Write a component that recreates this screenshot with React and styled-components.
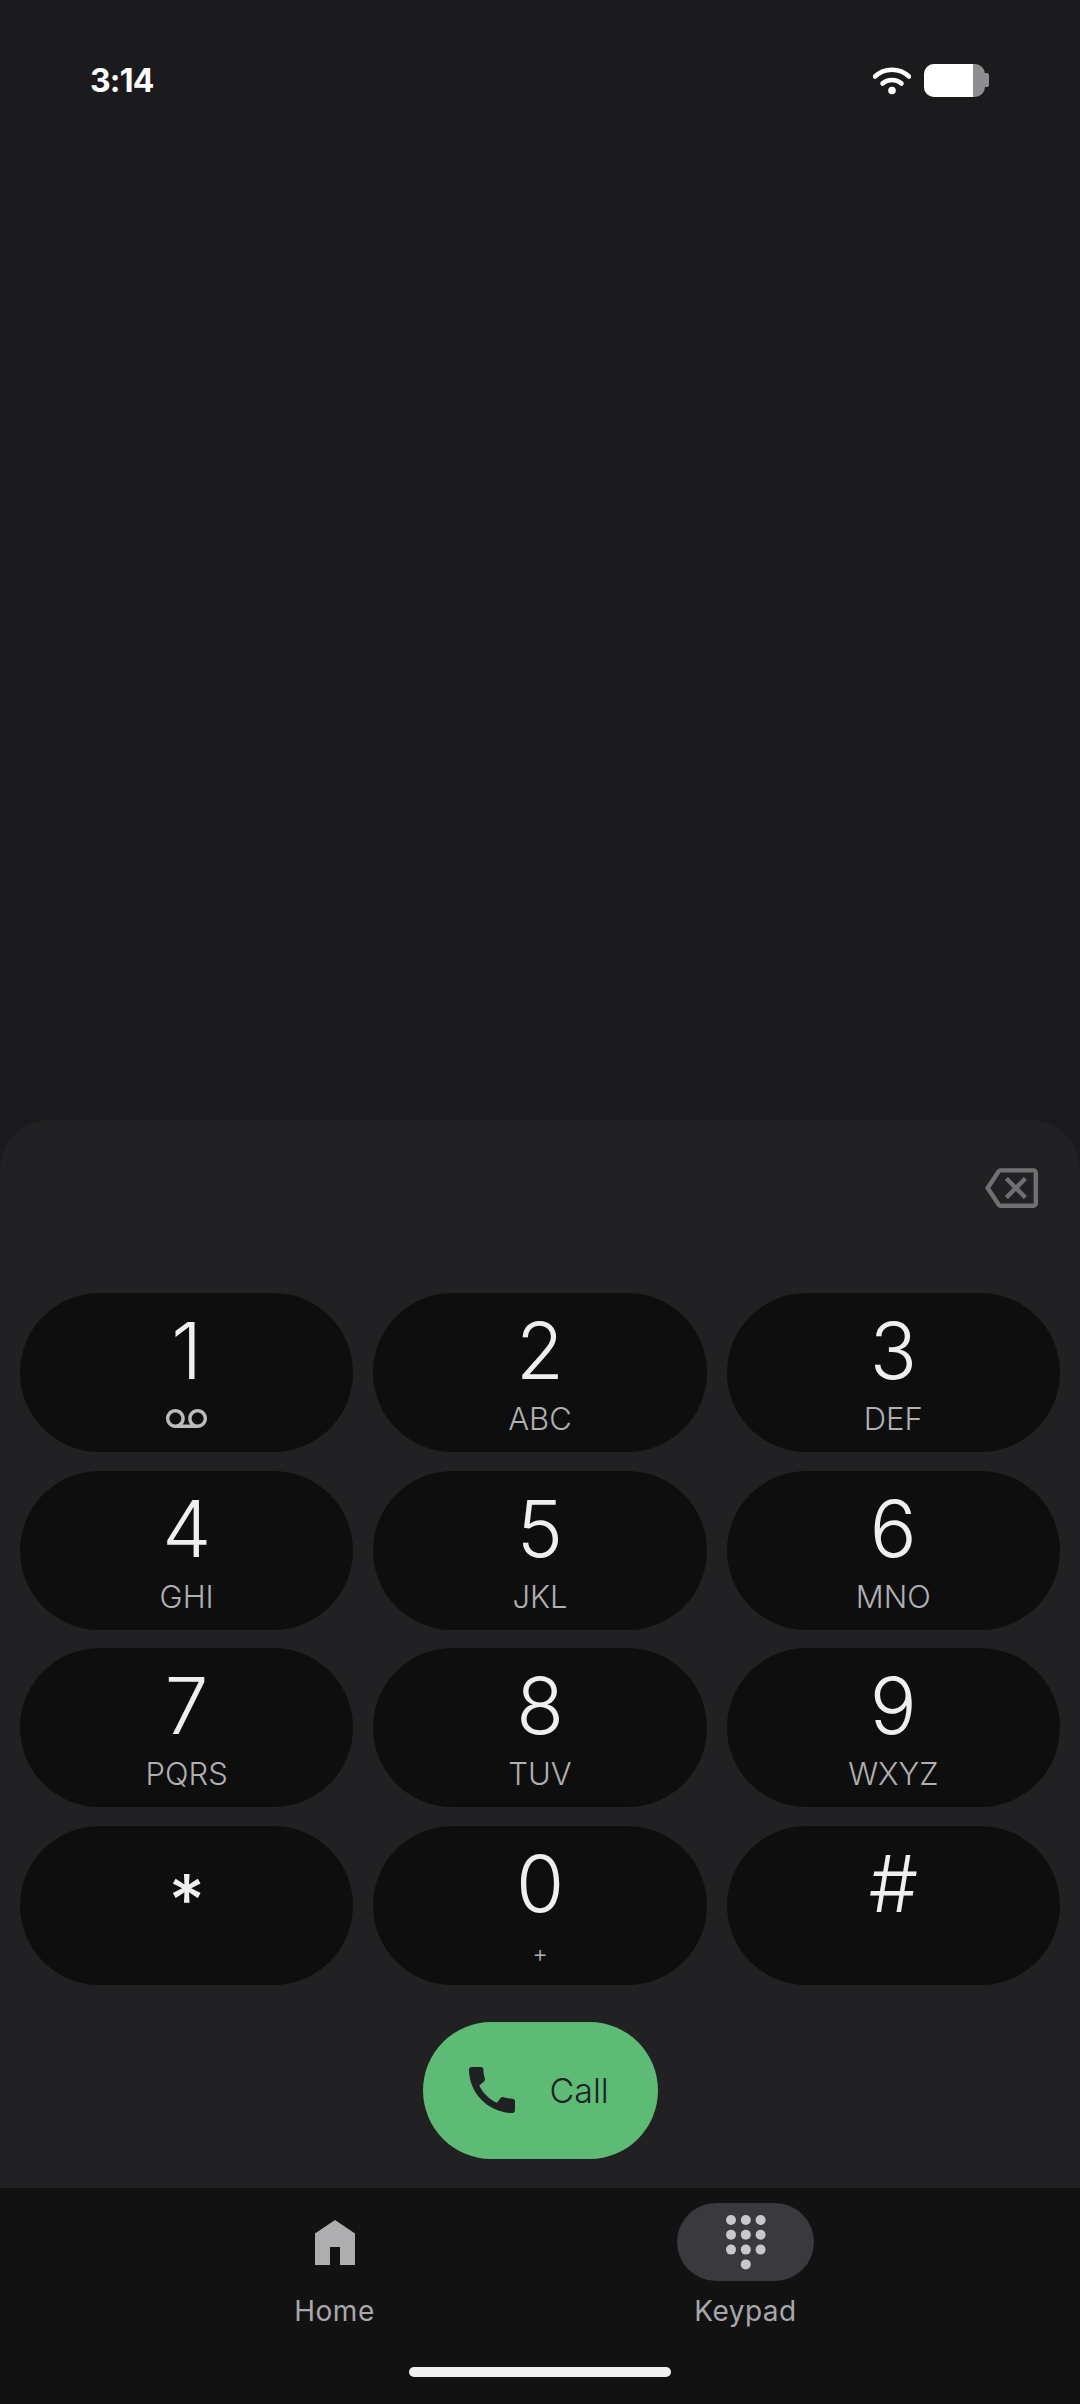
import React from "react";
import styled, { createGlobalStyle } from "styled-components";

const keys = [
  { digit: "1", voicemail: true },
  { digit: "2", sub: "ABC" },
  { digit: "3", sub: "DEF" },
  { digit: "4", sub: "GHI" },
  { digit: "5", sub: "JKL" },
  { digit: "6", sub: "MNO" },
  { digit: "7", sub: "PQRS" },
  { digit: "8", sub: "TUV" },
  { digit: "9", sub: "WXYZ" },
  { digit: "*", star: true },
  { digit: "0", plus: true },
  { digit: "#" },
];

const App = () => {
  return (
    <>
      <GlobalStyle />
      <Screen>
        <StatusBar>
          <Clock>3:14</Clock>
          <StatusIcons>
            <svg width="38" height="30" viewBox="0 0 38 30" fill="none">
              <path d="M2 11.5C11.5 2.5 26.5 2.5 36 11.5" stroke="#fff" strokeWidth="4.6" strokeLinecap="round" />
              <path d="M9.5 18.5C14.8 13.8 23.2 13.8 28.5 18.5" stroke="#fff" strokeWidth="4.6" strokeLinecap="round" />
              <circle cx="19" cy="25.5" r="3.8" fill="#fff" />
            </svg>
            <Battery>
              <BatteryLevel />
            </Battery>
            <BatteryCap />
          </StatusIcons>
        </StatusBar>

        <DialPanel>
          <BackspaceRow>
            <svg width="53" height="40" viewBox="0 3 24 18" fill="#707072">
              <path d="M22 3H7c-.69 0-1.23.35-1.59.88L0 12l5.41 8.11c.36.53.9.89 1.59.89h15c1.1 0 2-.9 2-2V5c0-1.1-.9-2-2-2zm0 16H7.07L2.4 12l4.66-7H22v14zm-11.59-2L14 13.41 17.59 17 19 15.59 15.41 12 19 8.41 17.59 7 14 10.59 10.41 7 9 8.41 12.59 12 9 15.59z" />
            </svg>
          </BackspaceRow>

          <KeyGrid>
            {keys.map((key) => (
              <Key key={key.digit}>
                <Digit $star={key.star}>{key.digit}</Digit>
                {key.sub && <SubLabel>{key.sub}</SubLabel>}
                {key.plus && <PlusLabel>+</PlusLabel>}
                {key.voicemail && (
                  <VoicemailIcon width="41" height="19" viewBox="0 6 24 11" fill="#bcbcbe">
                    <path d="M18.5 6C15.46 6 13 8.46 13 11.5c0 1.33.47 2.55 1.26 3.5H9.74c.79-.95 1.26-2.17 1.26-3.5C11 8.46 8.54 6 5.5 6S0 8.46 0 11.5 2.46 17 5.5 17h13c3.04 0 5.5-2.46 5.5-5.5S21.54 6 18.5 6zm-13 9C3.57 15 2 13.43 2 11.5S3.57 8 5.5 8 9 9.57 9 11.5 7.43 15 5.5 15zm13 0c-1.93 0-3.5-1.57-3.5-3.5S16.57 8 18.5 8 22 9.57 22 11.5 20.43 15 18.5 15z" />
                  </VoicemailIcon>
                )}
              </Key>
            ))}
          </KeyGrid>

          <CallRow>
            <CallButton>
              <svg width="46" height="46" viewBox="3 3 18 18" fill="#1f2125">
                <path d="M20.01 15.38c-1.23 0-2.42-.2-3.53-.56-.35-.12-.74-.03-1.01.24l-1.57 1.97c-2.83-1.35-5.48-3.9-6.89-6.83l1.95-1.66c.27-.28.35-.67.24-1.02-.37-1.11-.56-2.3-.56-3.53 0-.54-.45-.99-.99-.99H4.19C3.65 3 3 3.24 3 3.99 3 13.28 10.73 21 20.01 21c.71 0 .99-.63.99-1.18v-3.45c0-.54-.45-.99-.99-.99z" />
              </svg>
              <CallText>Call</CallText>
            </CallButton>
          </CallRow>
        </DialPanel>

        <BottomNav>
          <Tabs>
            <Tab>
              <TabIcon>
                <svg width="40" height="45" viewBox="0 0 40 45" fill="#aeadb0">
                  <path d="M20 0L40 13.5V45H25V27H15V45H0V13.5z" />
                </svg>
              </TabIcon>
              <TabLabel>Home</TabLabel>
            </Tab>
            <Tab>
              <TabIcon $active>
                <svg width="40" height="55" viewBox="0 0 40 55" fill="#c8c8cb">
                  {[0, 1, 2].map((row) =>
                    [0, 1, 2].map((col) => (
                      <circle key={`${row}-${col}`} cx={5 + col * 14.8} cy={5 + row * 14.8} r="5" />
                    ))
                  )}
                  <circle cx="19.8" cy="49.4" r="5" />
                </svg>
              </TabIcon>
              <TabLabel>Keypad</TabLabel>
            </Tab>
          </Tabs>
          <HomeIndicator />
        </BottomNav>
      </Screen>
    </>
  );
};

export default App;

const GlobalStyle = createGlobalStyle`
  html, body {
    margin: 0;
    padding: 0;
    background: #1b1b1d;
  }
  * {
    box-sizing: border-box;
  }
`;

const Screen = styled.div`
  width: 1080px;
  height: 2404px;
  display: flex;
  flex-direction: column;
  justify-content: space-between;
  background: #1b1b1d;
  font-family: Inter, Roboto, sans-serif;
  overflow: hidden;
`;

const StatusBar = styled.div`
  height: 160px;
  display: flex;
  align-items: center;
  justify-content: space-between;
  padding: 0 91px 0 90px;
`;

const Clock = styled.span`
  font-size: 32px;
  font-weight: 700;
  letter-spacing: -0.8px;
  color: #fff;
`;

const StatusIcons = styled.div`
  display: flex;
  align-items: center;
  gap: 13px;
`;

const Battery = styled.div`
  width: 61px;
  height: 33px;
  border-radius: 10px;
  background: #8e8e90;
  overflow: hidden;
  margin-right: -13px;
`;

const BatteryLevel = styled.div`
  width: 49px;
  height: 100%;
  background: #fff;
`;

const BatteryCap = styled.div`
  width: 4px;
  height: 14px;
  background: #8e8e90;
  border-radius: 0 2px 2px 0;
`;

const DialPanel = styled.div`
  height: 1068px;
  margin-top: auto;
  padding: 0 20px;
  background: #212124;
  border-radius: 50px 50px 0 0;
`;

const BackspaceRow = styled.div`
  height: 173px;
  display: flex;
  justify-content: flex-end;
  padding: 48px 22px 0 0;
`;

const KeyGrid = styled.div`
  display: grid;
  grid-template-columns: repeat(3, 1fr);
  grid-auto-rows: 159px;
  gap: 18.67px 20px;
`;

const Key = styled.div`
  height: 159px;
  display: flex;
  flex-direction: column;
  align-items: center;
  padding-top: 11px;
  background: #0e0e0f;
  border-radius: 80px;
`;

const Digit = styled.span`
  font-size: ${(props) => (props.$star ? "70px" : "78px")};
  line-height: 94px;
  font-weight: ${(props) => (props.$star ? 500 : 350)};
  color: #efeff0;
  transform: translateY(${(props) => (props.$star ? "16px" : "0")});
`;

const SubLabel = styled.span`
  margin-top: 3px;
  font-size: 31px;
  line-height: 36px;
  font-weight: 350;
  color: #b0b0b2;
`;

const PlusLabel = styled.span`
  margin-top: 5px;
  font-size: 24px;
  line-height: 36px;
  font-weight: 350;
  color: #b0b0b2;
`;

const VoicemailIcon = styled.svg`
  margin-top: 11px;
`;

const CallRow = styled.div`
  display: flex;
  justify-content: center;
  margin-top: 37px;
`;

const CallButton = styled.div`
  width: 235px;
  height: 137px;
  display: flex;
  align-items: center;
  gap: 35px;
  padding-left: 46px;
  background: #5dbb76;
  border-radius: 69px;
`;

const CallText = styled.span`
  font-size: 34px;
  font-weight: 350;
  color: #1f2125;
`;

const BottomNav = styled.div`
  height: 216px;
  display: flex;
  flex-direction: column;
  align-items: center;
  background: #121213;
`;

const Tabs = styled.div`
  width: 100%;
  display: grid;
  grid-template-columns: 1fr 1fr;
  padding: 15px 129px 0;
`;

const Tab = styled.div`
  display: flex;
  flex-direction: column;
  align-items: center;
`;

const TabIcon = styled.div`
  width: 137px;
  height: 78px;
  display: flex;
  align-items: center;
  justify-content: center;
  border-radius: 39px;
  background: ${(props) => (props.$active ? "#39393e" : "transparent")};
`;

const TabLabel = styled.span`
  margin-top: 12px;
  font-size: 28px;
  line-height: 36px;
  font-weight: 400;
  letter-spacing: 0.5px;
  color: #a8a8ab;
`;

const HomeIndicator = styled.div`
  width: 262px;
  height: 10px;
  margin-top: 38px;
  border-radius: 5px;
  background: #f1f1f1;
`;
